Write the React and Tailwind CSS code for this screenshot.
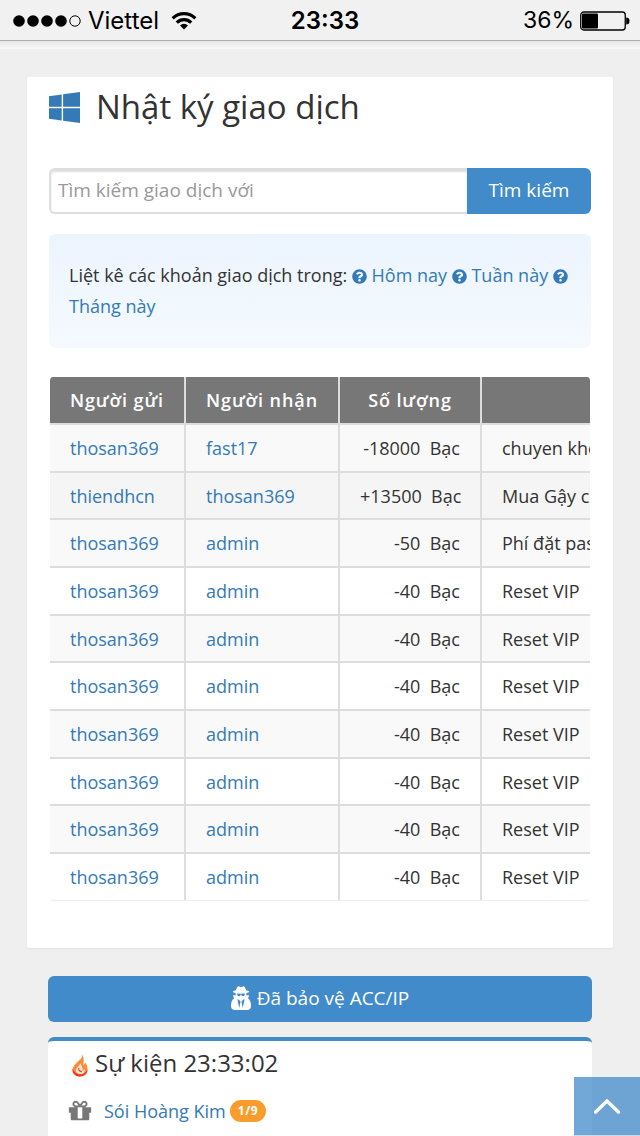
/**
 * TransactionLog: mobile page with the search, the list of transfers and the event box
 */

import { FaQuestionCircle } from "react-icons/fa";

const RANGES = ["Hôm nay", "Tuần này", "Tháng này"];

const COLUMNS = ["Người gửi", "Người nhận", "Số lượng", ""];

const RESET = { from: "thosan369", to: "admin", amount: "-40", note: "Reset VIP" };

const ROWS = [
  { from: "thosan369", to: "fast17",    amount: "-18000", note: "chuyen khoan" },
  { from: "thiendhcn", to: "thosan369", amount: "+13500", note: "Mua Gậy chơi" },
  { from: "thosan369", to: "admin",     amount: "-50",    note: "Phí đặt pass" },
  ...Array(7).fill(RESET),
];

const Icon = ({ viewBox, d, className }) => (
  <svg viewBox={viewBox} className={className} fill="currentColor" aria-hidden="true">
    <path d={d} />
  </svg>
);

const WINDOWS = "M682 1006v651l-682-94v-557h682zm0-743v659h-682v-565zm982 743v786l-907-125v-661h907zm0-878v794h-907v-669z";
const SECRET = "M576 1536l96-448-96-128-128-64zM832 1536l128-640-128 64-96 128zM992 526q-2-4-4-6-10-8-96-8-70 0-167 19-7 2-21 2t-21-2q-97-19-167-19-86 0-96 8-2 2-4 6 2 18 4 27 2 3 7.5 6.5t7.5 10.5q2 4 7.5 20.5t7 20.5 7.5 17 8.5 17 9 14 12 13.5 14 9.5 17.5 8 20.5 4 24.5 2q36 0 59-12.5t32.5-30 14.5-34.5 11.5-29.5 17.5-12.5h12q11 0 17.5 12.5t11.5 29.5 14.5 34.5 32.5 30 59 12.5q13 0 24.5-2t20.5-4 17.5-8 14-9.5 12-13.5 9-14 8.5-17 7.5-17 7-20.5 7.5-20.5q2-7 7.5-10.5t7.5-6.5q2-9 4-27zM1408 1405q0 121-73 190t-194 69h-874q-121 0-194-69t-73-190q0-61 4.5-118t19-125.5 37.5-123.5 63.5-103.5 93.5-74.5l-90-220h214q-22-64-22-128 0-12 2-32-194-40-194-96 0-57 210-99 17-62 51.5-134t70.5-114q32-37 76-37 30 0 84 31t84 31 84-31 84-31q44 0 76 37 36 42 70.5 114t51.5 134q210 42 210 99 0 56-194 96 7 81-20 160h214l-82 225q63 33 107.5 96.5t65.5 143.5 29 151.5 8 157.5z";
const GIFT = "M928 1356v-716h-320v716q0 25 18 38.5t46 13.5h192q28 0 46-13.5t18-38.5zm-456-844h195l-126-161q-26-31-69-31-40 0-68 28t-28 68 28 68 68 28zm688-96q0-40-28-68t-68-28q-43 0-69 31l-125 161h194q40 0 68-28t28-68zm376 256v320q0 14-9 23t-23 9h-96v416q0 40-28 68t-68 28h-1088q-40 0-68-28t-28-68v-416h-96q-14 0-23-9t-9-23v-320q0-14 9-23t23-9h440q-93 0-158.5-65.5t-65.5-158.5 65.5-158.5 158.5-65.5q107 0 168 77l128 165 128-165q61-77 168-77 93 0 158.5 65.5t65.5 158.5-65.5 158.5-158.5 65.5h440q14 0 23 9t9 23z";

function StatusBar() {
  return (
    <header className="grid h-[41px] shrink-0 grid-cols-3 items-center border-b border-[#adadad] bg-[#f1f1f1] pt-px font-['Inter',sans-serif] text-2xl text-black">
      <div className="flex items-center pl-3">
        <svg viewBox="0 0 70 14" className="h-[14px] w-[70px]" aria-hidden="true">
          <circle cx="7" cy="7" r="5.8" />
          <circle cx="21" cy="7" r="5.8" />
          <circle cx="35" cy="7" r="5.8" />
          <circle cx="49" cy="7" r="5.8" />
          <circle cx="63" cy="7" r="5.2" fill="none" stroke="black" />
        </svg>
        <span className="pl-[6px]">Viettel</span>
        <svg viewBox="0 0 26 19" className="ml-3 h-[19px] w-[26px] shrink-0" fill="none" stroke="black" strokeWidth="3.2" aria-hidden="true">
          <path d="M1.7 7.3a16 16 0 0 1 22.6 0" />
          <path d="M5.8 11.6a10.2 10.2 0 0 1 14.4 0" />
          <path d="M13 18.5l-4-4a5.7 5.7 0 0 1 8 0z" fill="black" stroke="none" />
        </svg>
      </div>
      <div className="pl-[10px] text-center font-semibold">23:33</div>
      <div className="flex items-center justify-end gap-[6px] pr-[10px]">
        <span className="text-[23px]">36%</span>
        <svg viewBox="0 0 50 20" className="h-5 w-[50px]" aria-hidden="true">
          <rect x="0.75" y="1" width="44.5" height="18" rx="3" fill="none" stroke="black" strokeWidth="1.3" />
          <rect x="2" y="2.5" width="16" height="15" rx="1" />
          <path d="M46.2 6.5q3.3 0 3.3 3.5t-3.3 3.5z" />
        </svg>
      </div>
    </header>
  );
}

function TransactionTable() {
  return (
    <div className="mt-[29px] overflow-hidden rounded border border-t-0 border-transparent border-b-[#f0f0f0]">
      <table className="w-[760px] table-fixed border-separate border-spacing-0 text-lg">
        <colgroup>
          <col className="w-[136px]" />
          <col className="w-[154px]" />
          <col className="w-[142px]" />
          <col />
        </colgroup>
        <thead>
          <tr className="h-[46px] bg-[#777777] text-white">
            {COLUMNS.map((c) => (
              <th key={c} className="border-r-2 border-[#dddddd] p-0 text-center font-semibold tracking-wider">{c}</th>
            ))}
          </tr>
        </thead>
        <tbody>
          {ROWS.map((r, i) => (
            <tr key={i} className="h-12 odd:bg-[#f9f9f9] nth-2:bg-[#f5f5f5] nth-[3n+2]:h-[47px] [&>td]:border-t-2 [&>td]:border-r-2 [&>td]:border-[#dddddd] [&>td]:px-5 [&>td]:py-0 [&>td]:whitespace-nowrap">
              <td><a href="#" className="text-[#337ab7]">{r.from}</a></td>
              <td><a href="#" className="text-[#337ab7]">{r.to}</a></td>
              <td className="text-right">{r.amount}&nbsp; Bạc</td>
              <td>{r.note}</td>
            </tr>
          ))}
        </tbody>
      </table>
    </div>
  );
}

export default function App() {
  return (
    <div className="flex min-h-screen flex-col bg-[#efefef] font-['Open_Sans',sans-serif] text-lg text-[#333333]">
      <StatusBar />
      <div className="h-2 shrink-0 bg-linear-to-b from-[#e6e6e6] to-[#f8f8f8]" />

      <main className="flex grow flex-col px-[27px] pt-7">
        <section className="rounded-xs bg-white px-[22px] pb-[47px] shadow-xs">
          <h1 className="flex h-[60px] items-center gap-4 text-[33px] leading-[60px]">
            <Icon viewBox="0 128 1664 1664" d={WINDOWS} className="size-[31px] text-[#337ab7]" />
            Nhật ký giao dịch
          </h1>

          <form className="mt-[31px] flex h-[46px]" onSubmit={(e) => e.preventDefault()}>
            <input
              type="text"
              aria-label="Tìm kiếm giao dịch với"
              placeholder="Tìm kiếm giao dịch với"
              className="min-w-0 grow rounded-l-md border-2 border-r-0 border-[#dddddd] bg-white px-[7px] text-[19px] inset-shadow-[0_2px_2px_#dcdcdc] placeholder:text-[#999999]"
            />
            <button type="submit" className="w-[124px] rounded-r-md bg-[#428bca] text-[19px] text-white">Tìm kiếm</button>
          </form>

          <p className="mt-5 rounded-md bg-linear-to-b from-[#ecf4fe] to-[#f4fafe] px-5 py-[26px] leading-[31px]">
            Liệt kê các khoản giao dịch trong:
            {RANGES.map((r) => (
              <span key={r}>
                {" "}
                <FaQuestionCircle className="inline size-[15px] align-[-2px] text-[#337ab7]" />{" "}
                <a href="#" className="text-[#337ab7]">{r}</a>
              </span>
            ))}
          </p>

          <TransactionTable />
        </section>

        <div className="flex grow flex-col px-[21px] pt-7">
          <button type="button" className="flex h-[46px] w-full items-center justify-center gap-[6px] rounded-md bg-[#428bca] text-[19px] text-white">
            <Icon viewBox="0 0 1408 1792" d={SECRET} className="h-[26px] w-5" />
            Đã bảo vệ ACC/IP
          </button>

          <section className="mt-[15px] grow rounded-t-md border-t-4 border-[#428bca] bg-white px-5">
            <h2 className="flex h-11 items-center gap-[6px] pl-[3px] text-2xl">
              <svg viewBox="0 0 18 24" className="mt-1 h-6 w-[18px]" aria-hidden="true">
                <path d="M10.500 1c1.500 4-1 5-4 8-3 3-5 5-5 8 0 4 3 6.500 7.500 6.500s7.500-3 7.500-7c0-3-1-5-2-7l-2 3c0-4 1-8-2-11.500z" fill="#ff8a35" />
                <path d="M1.600 15.500c-.6 4.500 2.900 8 7.400 8s7.500-3 7.500-7c-2 3.500-4 5-7 5-3.500 0-6.500-2-7.900-6z" fill="#f52f22" />
                <path d="M9 10c.5 3-4 4-4 7.500 0 2 1.500 3.500 4.500 3.500s4.500-2 4-5l-2 2c0-3-.5-6-2.500-8z" fill="#ffe9d8" />
                <path d="M8 15c-1 2 .5 3.500 3 3.500" fill="none" stroke="#f54c36" strokeWidth="1.300" />
              </svg>
              Sự kiện 23:33:02
            </h2>
            <div className="mt-2 flex h-9 items-center">
              <Icon viewBox="0 0 1536 1792" d={GIFT} className="h-[26px] w-6 text-[#777777]" />
              <a href="#" className="pl-3 text-[#337ab7]">Sói Hoàng Kim</a>
              <span className="ml-1 rounded-full bg-[#f89d2c] px-2 text-xs leading-[22px] font-bold tracking-wider text-white">1/9</span>
            </div>
          </section>
        </div>
      </main>

      <button
        type="button"
        aria-label="Lên đầu trang"
        onClick={() => window.scrollTo({ top: 0 })}
        className="fixed right-0 bottom-0 flex h-[59px] w-[66px] items-center justify-center border-b border-white/60 bg-[#428bca]/75"
      >
        <svg viewBox="0 0 26 16" className="h-4 w-[26px]" fill="none" stroke="white" strokeWidth="3.4" aria-hidden="true">
          <path d="M1.600 14L13 3l11.400 11" strokeLinecap="round" />
        </svg>
      </button>
    </div>
  );
}
